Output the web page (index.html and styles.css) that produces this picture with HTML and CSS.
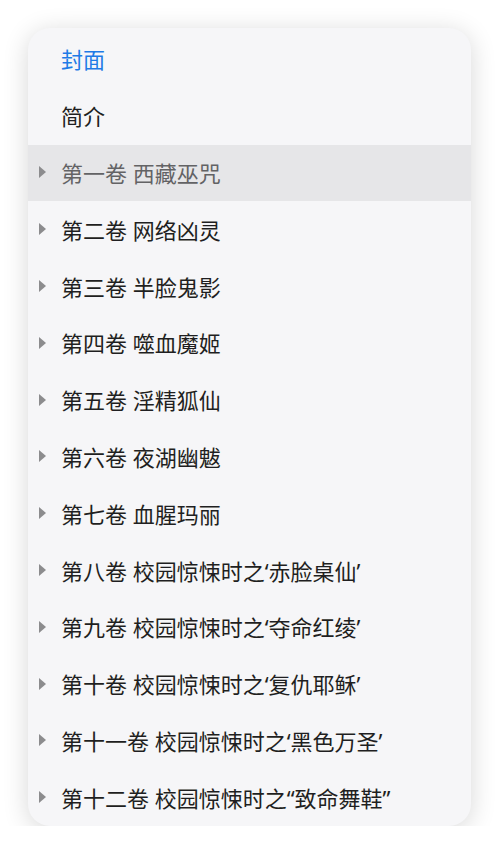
FILE: index.html
```html
<!DOCTYPE html>
<html lang="zh-CN">
<head>
<meta charset="utf-8">
<title>目录</title>
<link rel="stylesheet" href="styles.css">
</head>
<body>
<nav class="toc">
  <div class="row active"><span class="label">封面</span></div>
  <div class="row"><span class="label">简介</span></div>
  <div class="row hover"><span class="caret"></span><span class="label">第一卷 西藏巫咒</span></div>
  <div class="row"><span class="caret"></span><span class="label">第二卷 网络凶灵</span></div>
  <div class="row"><span class="caret"></span><span class="label">第三卷 半脸鬼影</span></div>
  <div class="row"><span class="caret"></span><span class="label">第四卷 噬血魔姬</span></div>
  <div class="row"><span class="caret"></span><span class="label">第五卷 淫精狐仙</span></div>
  <div class="row"><span class="caret"></span><span class="label">第六卷 夜湖幽魃</span></div>
  <div class="row"><span class="caret"></span><span class="label">第七卷 血腥玛丽</span></div>
  <div class="row"><span class="caret"></span><span class="label">第八卷 校园惊悚时之‘赤脸桌仙’</span></div>
  <div class="row"><span class="caret"></span><span class="label">第九卷 校园惊悚时之‘夺命红绫’</span></div>
  <div class="row"><span class="caret"></span><span class="label">第十卷 校园惊悚时之‘复仇耶稣’</span></div>
  <div class="row"><span class="caret"></span><span class="label">第十一卷 校园惊悚时之‘黑色万圣’</span></div>
  <div class="row"><span class="caret"></span><span class="label">第十二卷 校园惊悚时之“致命舞鞋”</span></div>
</nav>
</body>
</html>
```

FILE: styles.css
```css
html, body {
  margin: 0;
  padding: 0;
  background: #ffffff;
}

body {
  font-family: "Noto Sans", "Noto Sans CJK SC", sans-serif;
}

.toc {
  margin: 28px 29px 0 28px;
  padding-top: 3px;
  background: #f6f6f8;
  border-radius: 22px;
  box-shadow: 0 4px 26px rgba(0, 0, 0, 0.16);
  overflow: hidden;
  display: flex;
  flex-direction: column;
}

.row {
  height: 56.8px;
  display: flex;
  align-items: center;
  padding-left: 33px;
  position: relative;
}

.row.hover {
  background: #e6e6e8;
}

.caret {
  position: absolute;
  left: 11px;
  top: 50%;
  margin-top: -6.5px;
  width: 0;
  height: 0;
  border-left: 7px solid #8c8c8e;
  border-top: 6px solid transparent;
  border-bottom: 6px solid transparent;
}

.label {
  font-size: 22px;
  font-weight: 400;
  line-height: 1;
  color: #1f1f21;
  white-space: nowrap;
}

.row.active .label {
  color: #1f7be6;
}

.row.hover .label {
  color: #636365;
}
```
